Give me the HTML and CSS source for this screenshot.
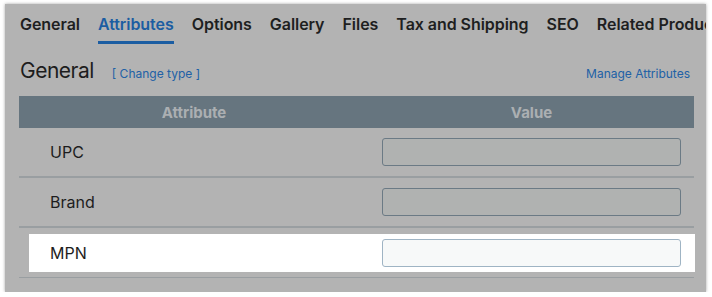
FILE: index.html
```html
<!DOCTYPE html>
<html lang="en">
<head>
    <meta charset="UTF-8">
    <meta name="viewport" content="width=device-width, initial-scale=1.0">
    <title>Product Attributes</title>
    <link rel="stylesheet" href="styles.css">
</head>
<body>
    <div class="screen">
        <nav class="tabs">
            <a>General</a>
            <a class="active">Attributes</a>
            <a>Options</a>
            <a>Gallery</a>
            <a>Files</a>
            <a>Tax and Shipping</a>
            <a>SEO</a>
            <a>Related Products</a>
        </nav>

        <div class="section-head">
            <h2>General</h2>
            <a class="change-type">[ Change type ]</a>
            <a class="manage">Manage Attributes</a>
        </div>

        <div class="attr-table">
            <div class="attr-row head">
                <div class="cell">Attribute</div>
                <div class="cell">Value</div>
            </div>
            <div class="attr-row">
                <div class="cell label">UPC</div>
                <div class="cell value"><input type="text"></div>
            </div>
            <div class="attr-row">
                <div class="cell label">Brand</div>
                <div class="cell value"><input type="text"></div>
            </div>
            <div class="attr-row last spotlight">
                <div class="cell label">MPN</div>
                <div class="cell value"><input type="text"></div>
            </div>
        </div>
    </div>
</body>
</html>
```

FILE: styles.css
```css
body {
    margin: 0;
    background: #fff;
    font-family: Inter, "Noto Sans", sans-serif;
    color: #1d1d1d;
}
.screen {
    width: 701px;
    height: 288px;
    margin: 4px 0 0 5px;
    padding: 10px 0 0 14px;
    box-sizing: border-box;
    background: #b3b3b3;
    box-shadow: 0 0 3px rgba(0, 0, 0, 0.35);
    overflow: hidden;
}
.tabs {
    display: flex;
    gap: 18px;
    white-space: nowrap;
    padding-left: 1px;
}
.tabs a {
    font-size: 16px;
    line-height: 20px;
    font-weight: 600;
    letter-spacing: -0.05px;
    color: #1e1f21;
    padding-bottom: 7px;
    border-bottom: 3px solid transparent;
}
.tabs a.active {
    color: #1b5da2;
    border-bottom-color: #1b5da2;
}
.section-head {
    display: flex;
    align-items: baseline;
    width: 675px;
    margin: 14px 0 12px;
    padding-left: 1px;
    box-sizing: border-box;
}
.section-head h2 {
    margin: 0;
    font-size: 21px;
    line-height: 26px;
    font-weight: 400;
    letter-spacing: -0.5px;
    color: #1d1d1d;
}
.change-type,
.manage {
    font-size: 12px;
    color: #2161a6;
}
.change-type {
    margin-left: 18px;
}
.manage {
    margin-left: auto;
    margin-right: 4px;
}
.attr-table {
    width: 675px;
}
.attr-row {
    display: grid;
    grid-template-columns: 350px 325px;
    height: 50px;
    box-sizing: border-box;
    border-bottom: 2px solid #999ea1;
    position: relative;
}
.attr-row.head {
    height: 32px;
    border: none;
    background: #66757f;
}
.attr-row.head .cell {
    justify-content: center;
    font-size: 15px;
    font-weight: 700;
    color: #abafb2;
}
.attr-row.last {
    border-bottom-width: 1px;
}
.cell {
    display: flex;
    align-items: center;
    position: relative;
    z-index: 1;
}
.cell.label {
    padding-left: 31px;
    font-size: 16px;
}
.cell.value {
    justify-content: center;
}
.cell input {
    width: 299px;
    height: 28px;
    box-sizing: border-box;
    border: 1px solid #6b7a85;
    border-radius: 3px;
    background: #b0b2b1;
    margin: 0;
    padding: 0 8px;
}
.spotlight::before {
    content: "";
    position: absolute;
    top: 6px;
    bottom: 5px;
    left: 10px;
    right: -1px;
    background: #fff;
}
.spotlight .cell input {
    border-color: #9fb4c4;
    background: #f7f9f9;
}
```
